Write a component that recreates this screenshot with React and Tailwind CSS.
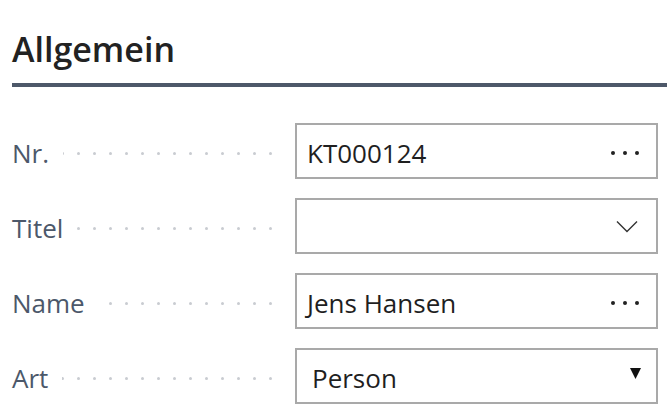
const FONT = { fontFamily: "'Open Sans', 'Noto Sans', sans-serif" };

const Dots = () => (
  <div className="flex-1 min-w-0 overflow-hidden flex justify-end items-center gap-[13px] ml-[14px] mr-[23px] pt-1">
    {Array.from({ length: 20 }).map((_, i) => (
      <span key={i} className="shrink-0 w-[3px] h-[3px] rounded-full bg-[#c9ccd1]" />
    ))}
  </div>
);

const Ellipsis = () => (
  <div className="flex items-center gap-[8px] mr-[17px] mt-[3px]">
    <span className="w-[4px] h-[4px] rounded-full bg-[#222]" />
    <span className="w-[4px] h-[4px] rounded-full bg-[#222]" />
    <span className="w-[4px] h-[4px] rounded-full bg-[#222]" />
  </div>
);

const Chevron = () => (
  <svg width="22" height="13" viewBox="0 0 22 13" className="mr-[18px]">
    <path d="M1 1.5 L11 11.5 L21 1.5" fill="none" stroke="#333" strokeWidth="1.4" />
  </svg>
);

const Triangle = () => (
  <svg width="11" height="11" viewBox="0 0 11 11" className="mr-[15px] -mt-[6px]">
    <path d="M0 0 H11 L5.5 11 Z" fill="#111" />
  </svg>
);

const Field = ({ label, value, icon, inset = 'pl-[10px]' }) => (
  <div className="flex items-center h-[56px]">
    <div className="w-[283px] flex items-center">
      <span className="text-[26px] text-[#4c586a] leading-none pt-1">{label}</span>
      <Dots />
    </div>
    <div className="w-[363px] h-[56px] border-2 border-[#a9a9a9] flex items-center justify-between bg-white">
      <span className={`text-[26px] text-[#1f1f1f] leading-none pt-1 ${inset}`}>{value}</span>
      {icon}
    </div>
  </div>
);

export default function App() {
  return (
    <div className="w-[667px] h-[416px] bg-white pl-3 overflow-hidden" style={FONT}>
      <h2 className="text-[34px] font-semibold text-[#222] leading-none pt-[32px]">Allgemein</h2>
      <div className="h-[4px] bg-[#4d5869] mt-[17px]" />
      <div className="flex flex-col gap-[19px] mt-[36px]">
        <Field label="Nr." value="KT000124" icon={<Ellipsis />} />
        <Field label="Titel" value="" icon={<Chevron />} />
        <Field label="Name" value="Jens Hansen" icon={<Ellipsis />} />
        <Field label="Art" value="Person" icon={<Triangle />} inset="pl-[15px]" />
      </div>
    </div>
  );
}
